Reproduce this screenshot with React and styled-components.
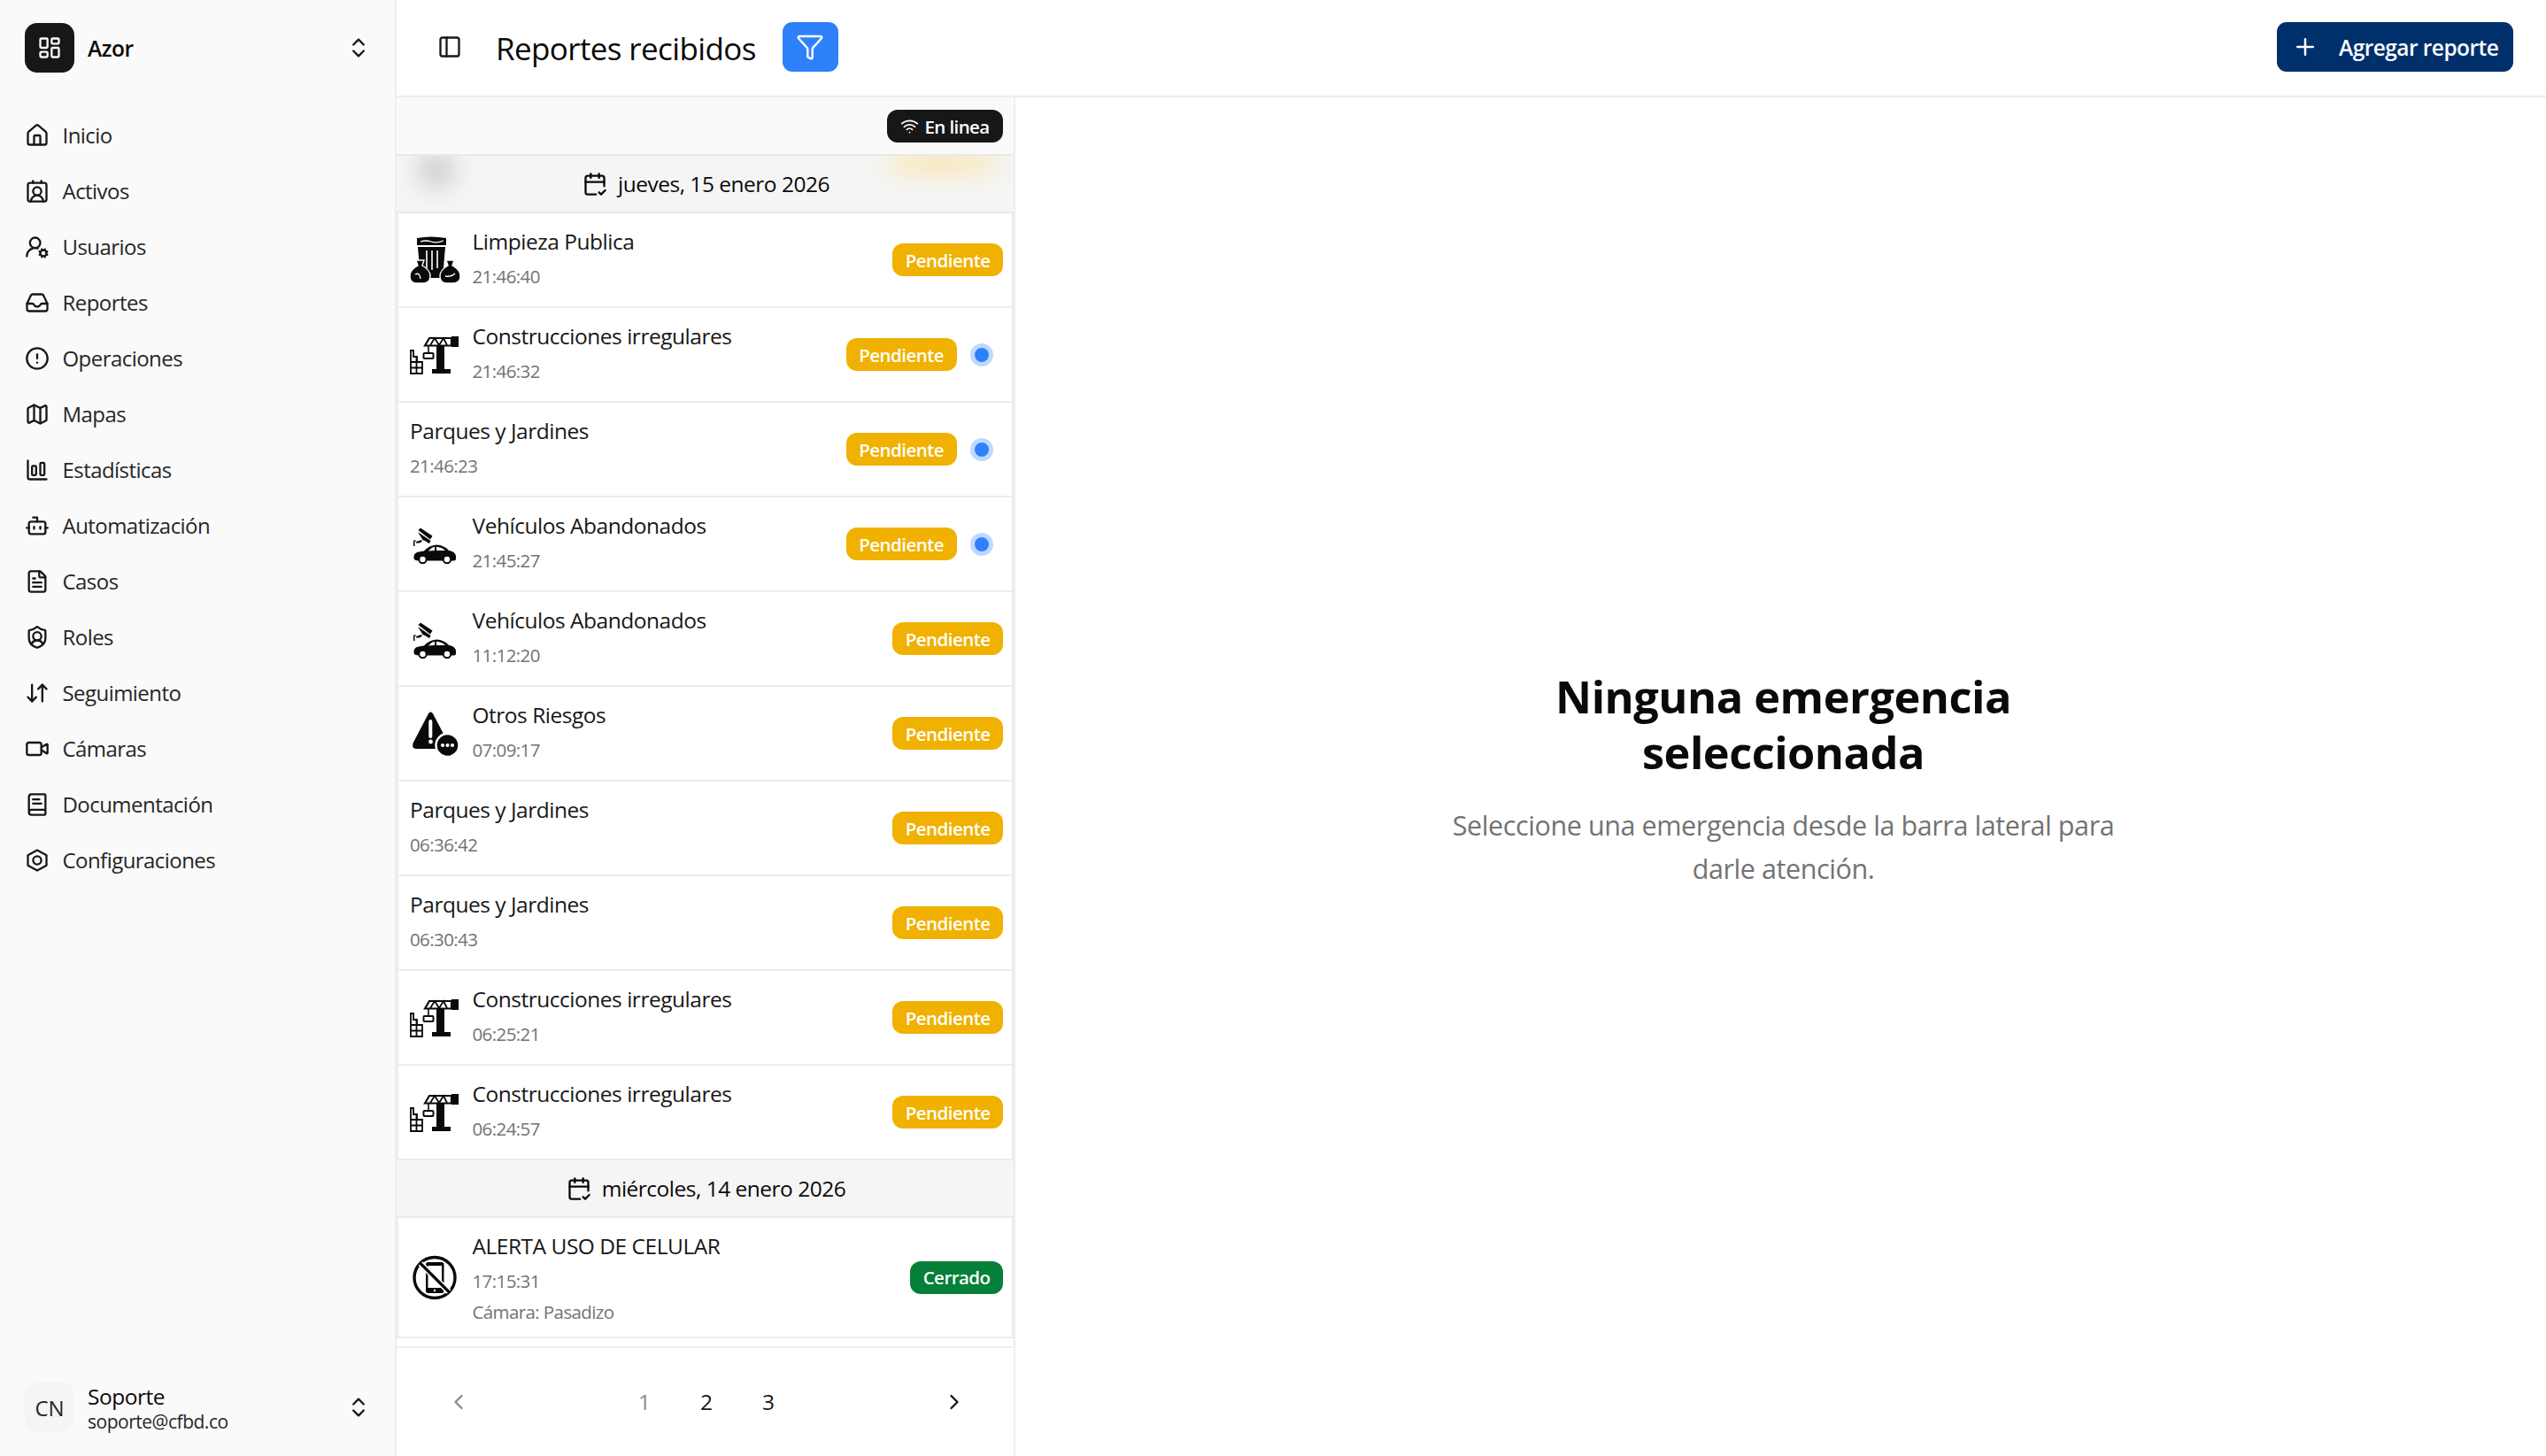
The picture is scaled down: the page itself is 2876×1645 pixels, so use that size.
import React from 'react';
import styled, { createGlobalStyle } from 'styled-components';
import {
  House, ContactRound, UserRoundCog, CircleAlert, Map as MapIcon, ChartColumnBig, Bot, FileText, ShieldUser,
  ArrowDownUp, Video, BookText, ChevronsUpDown, LayoutDashboard, PanelLeft, Funnel, Plus, Wifi, CalendarCheck2,
  ChevronLeft, ChevronRight,
} from 'lucide-react';

const Global = createGlobalStyle`
  html, body { margin: 0; padding: 0; height: 100%; background: #fff; }
  body { font-family: "Open Sans", "Noto Sans", sans-serif; color: #0a0a0a; overflow: hidden; }
  * { box-sizing: border-box; }
  #root { height: 100%; }
`;

const Shell = styled.div`display: flex; width: 2876px; height: 1645px; overflow: hidden;`;

const Sidebar = styled.aside`
  width: 448px; flex: none; display: flex; flex-direction: column;
  background: #fafafa; border-right: 2px solid #eeeeee; padding: 26px 26px 27px 28px;
`;
const Brand = styled.div`display: flex; align-items: center; gap: 15px; height: 56px; margin-bottom: 39px;`;
const LogoBox = styled.div`
  width: 56px; height: 56px; border-radius: 14px; background: #171717; color: #fafafa;
  display: flex; align-items: center; justify-content: center;
`;
const BrandName = styled.span`font-size: 24.5px; font-weight: 600; letter-spacing: -0.5px; flex: 1;`;
const Updown = styled.span`display: flex; margin-right: 1px; color: #171717;`;
const Nav = styled.nav`display: flex; flex-direction: column; flex: 1;`;
const NavItem = styled.div`
  height: 63px; display: flex; align-items: center; gap: 14.5px;
  font-size: 24px; letter-spacing: -0.55px; color: #262626;
`;
const NavGlyph = styled.span`width: 28px; height: 28px; flex: none; display: flex; align-items: center; justify-content: center; color: #171717;`;
const Account = styled.div`display: flex; align-items: center; gap: 15px; height: 56px;`;
const Avatar = styled.div`
  width: 56px; height: 56px; border-radius: 14px; background: #f5f5f5; font-size: 24px; color: #262626;
  display: flex; align-items: center; justify-content: center;
`;
const AccountText = styled.div`flex: 1; display: flex; flex-direction: column; margin-top: 2px;`;
const AccountName = styled.span`font-size: 24.5px; line-height: 30px; font-weight: 500; letter-spacing: -0.5px;`;
const AccountMail = styled.span`font-size: 21px; line-height: 27px; letter-spacing: -0.48px; color: #262626;`;

const Main = styled.main`flex: 1; display: flex; flex-direction: column; min-width: 0;`;
const Header = styled.header`
  height: 110px; flex: none; display: flex; align-items: center; padding: 0 37px 2px 46px; border-bottom: 2px solid #eeeeee;
`;
const HeaderIcon = styled.span`display: flex; color: #171717;`;
const Title = styled.h1`margin: 2px 30px 0 38px; font-size: 35px; font-weight: 500; letter-spacing: -0.62px;`;
const FilterButton = styled.button`
  width: 63px; height: 56px; border: 0; border-radius: 11px; background: #2f80fb; color: #fff;
  display: flex; align-items: center; justify-content: center; padding: 0;
`;
const AddButton = styled.button`
  margin-left: auto; width: 267px; height: 56px; border: 0; border-radius: 11px; background: #00306b; color: #fff;
  display: flex; align-items: center; padding: 0 0 0 17px; gap: 23px;
  font-family: inherit; font-size: 24.5px; font-weight: 600; letter-spacing: -0.55px;
`;

const Content = styled.div`flex: 1; display: flex; min-height: 0;`;
const ListColumn = styled.section`width: 699px; flex: none; display: flex; flex-direction: column; border-right: 2px solid #eeeeee;`;
const StatusBar = styled.div`
  height: 66px; flex: none; display: flex; justify-content: flex-end; align-items: center;
  padding: 1px 12px 0 0; background: #fafafa; border-bottom: 2px solid #e9e9e9;
`;
const OnlinePill = styled.div`
  width: 131px; height: 37px; border-radius: 12px; background: #171717; color: #fff;
  display: flex; align-items: center; justify-content: center; gap: 6px;
  font-size: 20.5px; font-weight: 600; letter-spacing: -0.6px;
`;
const Scroll = styled.div`flex: 1; min-height: 0; overflow: hidden;`;
const DateBar = styled.div`
  position: relative; overflow: hidden; height: 65px; display: flex; align-items: center; justify-content: center;
  background: #f5f5f5; border-bottom: 2px solid #eaeaea; font-size: 24.5px; letter-spacing: -0.5px;
`;
const Smear = styled.div`
  position: absolute; border-radius: 50%; filter: blur(12px);
  left: ${p => p.$x}px; top: ${p => p.$y}px; width: ${p => p.$w}px; height: ${p => p.$h}px; background: ${p => p.$c};
`;
const DateLabel = styled.span`position: relative; display: inline-flex; align-items: center; gap: 12px; margin-left: 2px;`;
const Row = styled.article`
  min-height: 107px; display: flex; align-items: center; gap: 13.5px; padding: 14px 10px 14px 13px;
  background: #fff; border-style: solid; border-color: #ececec; border-width: 0 2px 2px 2px;
`;
const RowIcon = styled.svg`width: 57px; height: 57px; flex: none; display: block; color: #0a0a0a;`;
const RowText = styled.div`align-self: flex-start; flex: 1; min-width: 0; display: flex; flex-direction: column; gap: 7.5px;`;
const RowTitle = styled.div`font-size: 24.5px; line-height: 35px; letter-spacing: -0.48px; color: #171717;`;
const RowMeta = styled.div`font-size: 20.5px; line-height: 28px; letter-spacing: -0.6px; color: #737373;`;
const Badge = styled.span`
  flex: none; height: 37px; padding: 0 14.5px; border-radius: 12px; color: #fff; display: flex; align-items: center;
  background: ${p => p.$closed ? '#058038' : '#f0b100'};
  font-size: 20.5px; font-weight: 600; letter-spacing: -0.55px;
`;
const Dot = styled.span`
  flex: none; width: 26px; height: 26px; margin: 0 11px 0 2px; border-radius: 50%;
  background: #2f80fb; border: 5px solid #bfd9fe;
`;
const Pager = styled.nav`
  height: 124px; flex: none; display: grid; grid-template-columns: 70px 1fr 70px; align-items: center;
  padding: 0 32px 1px 35px; border-top: 2px solid #eeeeee; font-size: 24.5px;
`;
const Pages = styled.div`display: flex; justify-content: center;`;
const PageNum = styled.span`width: 70px; text-align: center; color: ${p => p.$muted ? '#8a8a8a' : '#171717'};`;
const PagerArrow = styled.span`display: flex; justify-content: center; color: ${p => p.$muted ? '#8a8a8a' : '#171717'};`;

const Empty = styled.section`flex: 1; display: flex; flex-direction: column; align-items: center; padding: 645px 0 0 6px;`;
const EmptyTitle = styled.h2`
  margin: 0; width: 600px; text-align: center; font-size: 50.5px; line-height: 63px; font-weight: 700; letter-spacing: -0.5px; color: #0a0a0a;
`;
const EmptyText = styled.p`
  margin: 27px 0 0; width: 760px; text-align: center; font-size: 30.5px; line-height: 49px; letter-spacing: -0.41px; color: #737373;
`;

const InboxIcon = () => (
  <svg width="26" height="24" viewBox="0 0 26 24" fill="none" stroke="currentColor" strokeWidth="2.3" strokeLinejoin="round" strokeLinecap="round">
    <path d="M1.5 13 L6 3.5 Q6.5 2.5 8 2.5 H18 Q19.5 2.5 20 3.5 L24.5 13 V19 Q24.5 21.5 22 21.5 H4 Q1.5 21.5 1.5 19 Z" />
    <path d="M1.5 13 H7 Q9 13 9.5 14.5 Q10.5 16.5 13 16.5 Q15.5 16.5 16.5 14.5 Q17 13 19 13 H24.5" />
  </svg>
);
const HexIcon = () => (
  <svg width="24" height="26" viewBox="0 0 24 26" fill="none" stroke="currentColor" strokeWidth="2.3" strokeLinejoin="round">
    <path d="M12 1.5 L22.5 7.2 V18.8 L12 24.5 L1.5 18.8 V7.2 Z" />
    <circle cx="12" cy="13" r="4.6" />
  </svg>
);

const TrashArt = () => (
  <RowIcon viewBox="0 0 57 57">
    <path d="M8 4 Q24 1 41 4 V12 H8 Z" fill="currentColor" />
    <path d="M12 8 Q18 6 24 8 T38 7" stroke="#fff" strokeWidth="1.3" fill="none" />
    <path d="M9 14 H40 L37 49 H12 Z" fill="currentColor" />
    <path d="M19 18 V38 M25 18 V40 M31 18 V38" stroke="#fff" strokeWidth="1.6" />
    <path d="M7 29 H16 L14 35 Q23 40 23 47 Q23 55 15 55 H7 Q0 55 0 47 Q0 40 9 35 Z" fill="currentColor" stroke="#fff" strokeWidth="1.4" />
    <path d="M41 29 H50 L48 35 Q57 40 57 47 Q57 55 49 55 H41 Q34 55 34 47 Q34 40 43 35 Z" fill="currentColor" stroke="#fff" strokeWidth="1.4" />
    <path d="M6 45 Q11 42 12 50 M40 47 Q47 48 51 44" stroke="#fff" strokeWidth="1.4" fill="none" />
  </RowIcon>
);
const CraneArt = () => (
  <RowIcon viewBox="0 0 57 57">
    <path d="M17 18.5 L22 10 H47 V18.5 Z" fill="none" stroke="currentColor" strokeWidth="2.2" />
    <path d="M23 18 L28 10 L33 18 L38 10 L42 18" fill="none" stroke="currentColor" strokeWidth="1.8" />
    <rect x="47" y="8" width="8" height="12" fill="currentColor" />
    <rect x="30" y="19" width="9" height="27" fill="currentColor" />
    <rect x="25" y="45" width="21" height="5" fill="currentColor" />
    <path d="M21 18 V27" stroke="currentColor" strokeWidth="1.6" />
    <rect x="15.5" y="27" width="11" height="6" rx="1" fill="none" stroke="currentColor" strokeWidth="2" />
    <path d="M1 50 V24 H4 V31 H8 V37 H14 V50 Z M1 37 H14 M1 43.5 H14 M7.5 31 V50" fill="none" stroke="currentColor" strokeWidth="1.8" />
  </RowIcon>
);
const CarArt = () => (
  <RowIcon viewBox="0 0 57 57">
    <g fill="currentColor">
      <path d="M9.5 13 L12 10.5 L25.5 19.5 L23 23.5 Z" />
      <path d="M9 15 L23.5 25 L22 28 L20 27 L18 25.5 L14.5 24 Z" />
      <path d="M14 25.5 L11 27.5 H7 V25.5 H5.5 V31 H4 V24.5 H7 V26 L13 24 Z" />
      <path d="M4.5 43 Q4.5 38.5 10 37.5 L16 36.5 Q22 30 30 29.5 Q39 30 44 36 Q51 37 52 42 V46 Q51.5 47.5 49 47.5 H11 Q5 47.5 4.5 45 Z" />
    </g>
    <path d="M21 36.4 Q25 32 28 31.7 V36 Z M30 31.7 Q36 32 40 36 H30 Z" fill="#fff" />
    <circle cx="14.5" cy="46" r="4.2" fill="#fff" stroke="currentColor" strokeWidth="2" />
    <circle cx="42" cy="46" r="4.2" fill="#fff" stroke="currentColor" strokeWidth="2" />
  </RowIcon>
);
const WarnArt = () => (
  <RowIcon viewBox="0 0 57 57">
    <path d="M22 6.5 Q23.5 4.5 25 6.5 L42 39 Q44 44 40 45 H7 Q3 45 4.5 40 Z" fill="currentColor" stroke="currentColor" strokeWidth="2" strokeLinejoin="round" />
    <path d="M23.3 15 V32" stroke="#fff" strokeWidth="4" strokeLinecap="round" />
    <circle cx="23.5" cy="38" r="2.4" fill="#fff" />
    <circle cx="42.5" cy="42" r="13" fill="currentColor" stroke="#fff" strokeWidth="2.5" />
    <circle cx="37" cy="42" r="2.1" fill="#fff" /><circle cx="42.5" cy="42" r="2.1" fill="#fff" /><circle cx="48" cy="42" r="2.1" fill="#fff" />
  </RowIcon>
);
const PhoneArt = () => (
  <RowIcon viewBox="0 0 57 57">
    <circle cx="28" cy="28.5" r="23" fill="none" stroke="currentColor" strokeWidth="3.4" />
    <rect x="18" y="11" width="20.5" height="35" rx="2.5" fill="currentColor" />
    <rect x="20.5" y="15" width="15.5" height="25" fill="#fff" />
    <path d="M12 12.5 L44 44.5" stroke="#fff" strokeWidth="6.5" />
    <path d="M11.5 12 L44.5 45" stroke="currentColor" strokeWidth="3.2" />
    <circle cx="28" cy="43" r="1.2" fill="#fff" />
  </RowIcon>
);

const glyph = { size: 28, strokeWidth: 2 };
const navItems = [
  ['Inicio', <House {...glyph} />], ['Activos', <ContactRound {...glyph} />],
  ['Usuarios', <UserRoundCog {...glyph} />], ['Reportes', <InboxIcon />],
  ['Operaciones', <CircleAlert {...glyph} />], ['Mapas', <MapIcon {...glyph} />],
  ['Estadísticas', <ChartColumnBig {...glyph} />], ['Automatización', <Bot {...glyph} />],
  ['Casos', <FileText {...glyph} />], ['Roles', <ShieldUser {...glyph} />],
  ['Seguimiento', <ArrowDownUp {...glyph} />], ['Cámaras', <Video {...glyph} />],
  ['Documentación', <BookText {...glyph} />], ['Configuraciones', <HexIcon />],
];

const rows = [
  [<TrashArt />, 'Limpieza Publica', '21:46:40', false],
  [<CraneArt />, 'Construcciones irregulares', '21:46:32', true],
  [null, 'Parques y Jardines', '21:46:23', true],
  [<CarArt />, 'Vehículos Abandonados', '21:45:27', true],
  [<CarArt />, 'Vehículos Abandonados', '11:12:20', false],
  [<WarnArt />, 'Otros Riesgos', '07:09:17', false],
  [null, 'Parques y Jardines', '06:36:42', false],
  [null, 'Parques y Jardines', '06:30:43', false],
  [<CraneArt />, 'Construcciones irregulares', '06:25:21', false],
  [<CraneArt />, 'Construcciones irregulares', '06:24:57', false],
];

export default function App() {
  return (
    <Shell>
      <Global />
      <Sidebar>
        <Brand>
          <LogoBox><LayoutDashboard size={28} strokeWidth={2} /></LogoBox>
          <BrandName>Azor</BrandName>
          <Updown><ChevronsUpDown size={28} strokeWidth={2} /></Updown>
        </Brand>
        <Nav>
          {navItems.map(([label, icon]) => <NavItem key={label}><NavGlyph>{icon}</NavGlyph><span>{label}</span></NavItem>)}
        </Nav>
        <Account>
          <Avatar>CN</Avatar>
          <AccountText>
            <AccountName>Soporte</AccountName>
            <AccountMail>soporte@cfbd.co</AccountMail>
          </AccountText>
          <Updown><ChevronsUpDown size={28} strokeWidth={2} /></Updown>
        </Account>
      </Sidebar>
      <Main>
        <Header>
          <HeaderIcon><PanelLeft size={28} strokeWidth={2} /></HeaderIcon>
          <Title>Reportes recibidos</Title>
          <FilterButton><Funnel size={32} strokeWidth={1.8} /></FilterButton>
          <AddButton><Plus size={30} strokeWidth={2} /><span>Agregar reporte</span></AddButton>
        </Header>
        <Content>
          <ListColumn>
            <StatusBar><OnlinePill><Wifi size={21} strokeWidth={2} />En linea</OnlinePill></StatusBar>
            <Scroll>
              <DateBar>
                <Smear $x={22} $y={-6} $w={46} $h={44} $c="#d4d4d4" />
                <Smear $x={550} $y={-4} $w={132} $h={26} $c="#f8e7b8" />
                <DateLabel><CalendarCheck2 size={28} strokeWidth={2} />jueves, 15 enero 2026</DateLabel>
              </DateBar>
              {rows.map(([art, title, time, unread], i) => (
                <Row key={i}>
                  {art}
                  <RowText><RowTitle>{title}</RowTitle><RowMeta>{time}</RowMeta></RowText>
                  <Badge>Pendiente</Badge>
                  {unread && <Dot />}
                </Row>
              ))}
              <DateBar>
                <DateLabel><CalendarCheck2 size={28} strokeWidth={2} />miércoles, 14 enero 2026</DateLabel>
              </DateBar>
              <Row>
                <PhoneArt />
                <RowText>
                  <RowTitle>ALERTA USO DE CELULAR</RowTitle>
                  <RowMeta>17:15:31</RowMeta>
                  <RowMeta>Cámara: Pasadizo</RowMeta>
                </RowText>
                <Badge $closed>Cerrado</Badge>
              </Row>
            </Scroll>
            <Pager>
              <PagerArrow $muted><ChevronLeft size={28} strokeWidth={2} /></PagerArrow>
              <Pages><PageNum $muted>1</PageNum><PageNum>2</PageNum><PageNum>3</PageNum></Pages>
              <PagerArrow><ChevronRight size={28} strokeWidth={2} /></PagerArrow>
            </Pager>
          </ListColumn>
          <Empty>
            <EmptyTitle>Ninguna emergencia seleccionada</EmptyTitle>
            <EmptyText>Seleccione una emergencia desde la barra lateral para darle atención.</EmptyText>
          </Empty>
        </Content>
      </Main>
    </Shell>
  );
}
